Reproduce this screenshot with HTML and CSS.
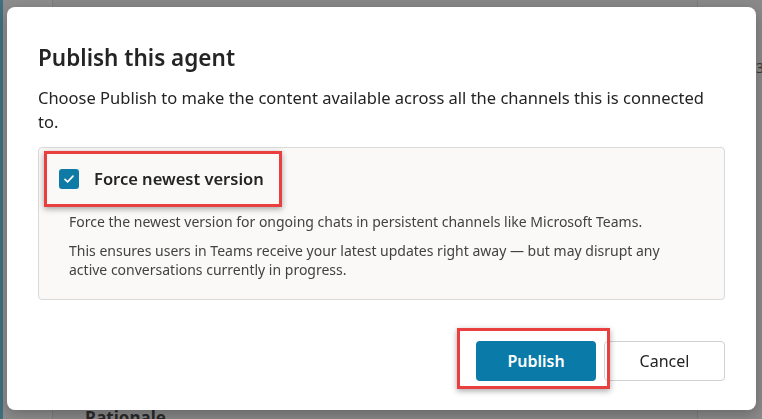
FILE: index.html
```html
<!DOCTYPE html>
<html lang="en">
<head>
    <meta charset="UTF-8">
    <meta name="viewport" content="width=device-width, initial-scale=1.0">
    <title>Publish this agent</title>
    <link rel="stylesheet" href="styles.css">
</head>
<body>
    <!-- Page behind the dialog, dimmed -->
    <div class="backdrop">
        <div class="rail"></div>
        <div class="main">
            <div class="main-bottom">Rationale <span class="chev">&#8964;</span></div>
        </div>
        <div class="side">
            <span class="side-char">3</span>
        </div>
    </div>

    <!-- Dialog -->
    <div class="dialog" role="dialog" aria-labelledby="dlg-title">
        <h1 id="dlg-title" class="dialog-title">Publish this agent</h1>
        <p class="dialog-text">Choose Publish to make the content available across all the channels this is connected to.</p>

        <section class="option-box">
            <div class="option-head">
                <label class="check-row">
                    <span class="checkbox">
                        <svg width="14" height="14" viewBox="0 0 14 14"><path d="M3 7.3 5.6 9.8 11 4.2" fill="none" stroke="#fff" stroke-width="1.7" stroke-linecap="round" stroke-linejoin="round"/></svg>
                    </span>
                    <span class="check-label">Force newest version</span>
                </label>
                <span class="callout callout-check"></span>
            </div>
            <p class="option-text">Force the newest version for ongoing chats in persistent channels like Microsoft Teams.</p>
            <p class="option-text">This ensures users in Teams receive your latest updates right away — but may disrupt any active conversations currently in progress.</p>
        </section>

        <div class="actions">
            <div class="btn-wrap">
                <button class="btn btn-primary">Publish</button>
                <span class="callout callout-btn"></span>
            </div>
            <button class="btn btn-secondary">Cancel</button>
        </div>
    </div>
</body>
</html>
```

FILE: styles.css
```css
* {
    margin: 0;
    padding: 0;
    box-sizing: border-box;
}

body {
    width: 762px;
    height: 419px;
    overflow: hidden;
    background-color: #878787;
    font-family: "Segoe UI", "Noto Sans", "Open Sans", sans-serif;
    color: #242424;
}

/* dimmed page behind */
.backdrop {
    display: flex;
    height: 419px;
}

.rail {
    width: 53px;
    background-color: #8d8d8d;
    border-left: 3px solid #3f6f80;
    border-right: 1px solid #7c7c7c;
}

.main {
    flex: 1;
    display: flex;
    flex-direction: column;
    justify-content: flex-end;
    background-color: #888888;
}

.main-bottom {
    padding-left: 32px;
    font-size: 17px;
    font-weight: 700;
    color: #2a2a2a;
    line-height: 22px;
    margin-bottom: -10px;
}

.chev {
    font-weight: 400;
    color: #555;
}

.side {
    width: 65px;
    background-color: #8a8a8a;
    border-left: 1px solid #7c7c7c;
    padding: 58px 0 0 58px;
    color: #3a3a3a;
    font-size: 14px;
}

/* dialog */
.dialog {
    position: fixed;
    left: 7px;
    top: 7px;
    width: 749px;
    height: 403px;
    background-color: #fff;
    border-radius: 8px;
    padding: 35px 31px 0 31px;
    box-shadow: 0 4px 14px rgba(0, 0, 0, 0.25);
}

.dialog-title {
    font-size: 22.5px;
    font-weight: 600;
    line-height: 32px;
    color: #242424;
}

.dialog-text {
    margin-top: 12px;
    font-size: 16.5px;
    line-height: 24px;
    color: #242424;
}

.option-box {
    margin-top: 13px;
    background-color: #faf9f8;
    border: 1px solid #d9d9d9;
    border-radius: 4px;
    padding: 19px 20px 20px 20px;
}

.option-head {
    position: relative;
    margin-bottom: 22px;
}

.check-row {
    display: flex;
    align-items: center;
    gap: 15px;
}

.checkbox {
    width: 20px;
    height: 20px;
    border-radius: 3px;
    background-color: #0f7aa6;
    display: flex;
    align-items: center;
    justify-content: center;
}

.check-label {
    font-size: 16.5px;
    font-weight: 600;
    color: #242424;
}

.option-text {
    margin-left: 10px;
    font-size: 14px;
    line-height: 19px;
    color: #424242;
    margin-bottom: 10px;
    max-width: 600px;
}

.option-text:last-child {
    margin-bottom: 0;
}

/* red annotation boxes */
.callout {
    position: absolute;
    border: 3px solid #e9403f;
    box-shadow: 0 2px 6px rgba(0, 0, 0, 0.35);
    pointer-events: none;
}

.callout-check {
    left: -15px;
    top: -16px;
    width: 238px;
    height: 56px;
}

.callout-btn {
    left: -19px;
    top: -13px;
    width: 153px;
    height: 61px;
}

.actions {
    display: flex;
    justify-content: flex-end;
    gap: 8px;
    margin-top: 41px;
}

.btn-wrap {
    position: relative;
}

.btn {
    height: 40px;
    border-radius: 4px;
    font-family: inherit;
    font-size: 16px;
    font-weight: 600;
}

.btn-primary {
    width: 120px;
    background-color: #0a7aa8;
    color: #fff;
    border: none;
}

.btn-secondary {
    width: 121px;
    background-color: #fff;
    color: #242424;
    border: 1px solid #d1d1d1;
    font-weight: 400;
}
```
